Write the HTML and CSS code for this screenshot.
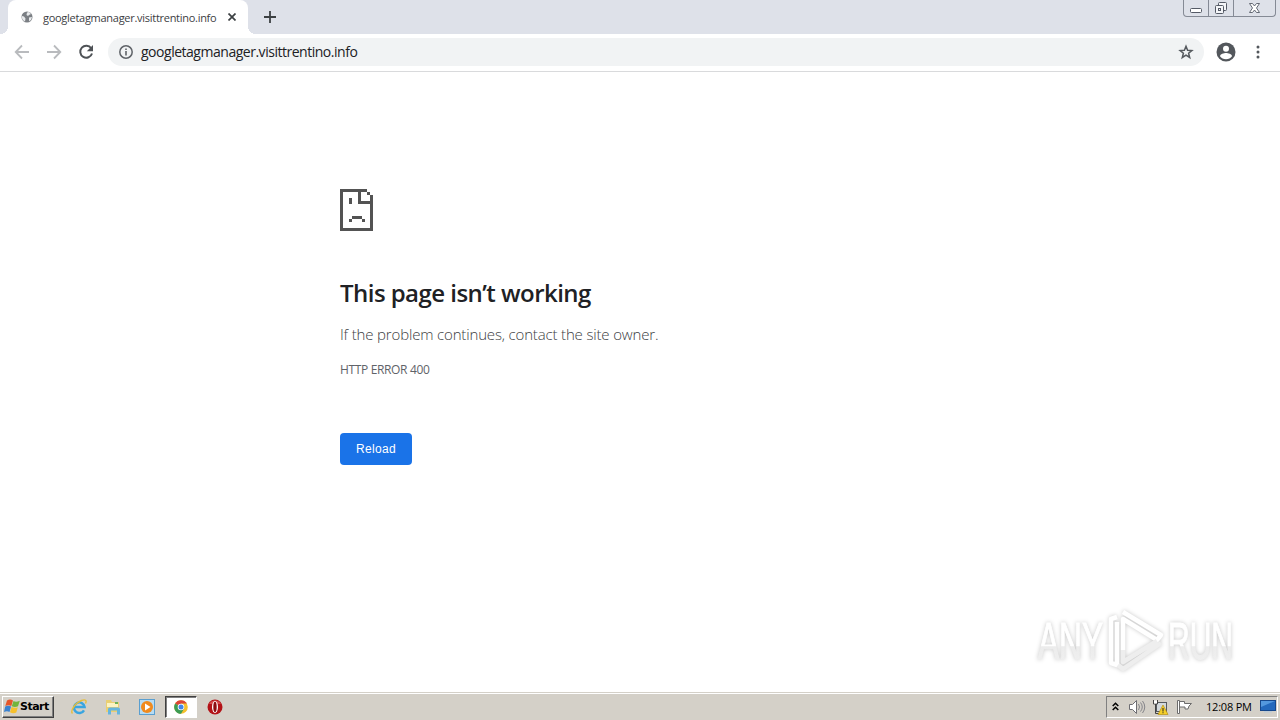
FILE: index.html
```html
<!DOCTYPE html>
<html lang="en">

<head>
  <meta charset="UTF-8">
  <meta name="viewport" content="width=device-width, initial-scale=1.0">
  <title>googletagmanager.visittrentino.info</title>
  <link rel="stylesheet" href="styles.css">
</head>

<body>

  <div id="tabstrip">
    <div class="tab">
      <svg class="favicon" width="12" height="12" viewBox="0 0 12 12">
        <circle cx="6" cy="6" r="5.500" fill="#7b7f84" />
        <path d="M1 5l2 .5 1.500 2L4 10.500A5 5 0 0 1 1 5zM6 1.500L8 1l2 2L8 4 7 5 5.500 4zM8 6.500l3-.5-1 3-2 1.200z" fill="#e8eaec" />
      </svg>
      <span class="tab-title">googletagmanager.visittrentino.info</span>
      <svg class="tab-close" width="8" height="8" viewBox="0 0 8 8">
        <path d="M.5.5l7 7M7.500.5l-7 7" stroke="#3c4043" stroke-width="1.700" />
      </svg>
    </div>
    <svg class="new-tab" width="12" height="12" viewBox="0 0 12 12">
      <path d="M6 0v12M0 6h12" stroke="#3c4043" stroke-width="1.800" />
    </svg>
    <div class="window-buttons">
      <div class="win-min">
        <svg width="13" height="6" viewBox="0 0 13 6"><rect x=".5" y=".5" width="11" height="4" rx="1" fill="#fff" stroke="#555a66" /></svg>
      </div>
      <div class="win-max">
        <svg width="14" height="14" viewBox="0 0 14 14" fill="#f4f5f8" stroke="#555a66">
          <rect x="4.500" y="1.500" width="8" height="8" rx="1" />
          <rect x="1.500" y="4.500" width="8" height="8" rx="1" />
          <rect x="4.500" y="7.500" width="2" height="2" />
        </svg>
      </div>
      <div class="win-close">
        <svg width="13" height="12" viewBox="0 0 13 12">
          <path d="M1.500 1.500h3l2 2.500 2-2.500h3L8.500 6l3 4.500h-3l-2-2.500-2 2.500h-3l3-4.500z" fill="#fff" stroke="#555a66" stroke-width=".9" />
        </svg>
      </div>
    </div>
  </div>

  <div id="toolbar">
    <svg class="nav" width="16" height="16" viewBox="0 0 16 16" fill="none" stroke="#b9bbbe" stroke-width="1.800">
      <path d="M15 8H2M8 1.500L1.700 8 8 14.500" />
    </svg>
    <svg class="nav" width="16" height="16" viewBox="0 0 16 16" fill="none" stroke="#b9bbbe" stroke-width="1.800">
      <path d="M1 8h13M8 1.500L14.300 8 8 14.500" />
    </svg>
    <svg class="nav" width="16" height="16" viewBox="0 0 16 16">
      <path d="M13.200 4.300A6 6 0 1 0 14 9.500" fill="none" stroke="#4e5256" stroke-width="2" />
      <path d="M15 1v6.200H8.800z" fill="#4e5256" />
    </svg>
    <div class="omnibox">
      <svg width="14" height="14" viewBox="0 0 14 14">
        <circle cx="7" cy="7" r="6.200" fill="none" stroke="#5f6368" stroke-width="1.500" />
        <path d="M7 6v4.500M7 3.500V5" stroke="#5f6368" stroke-width="1.600" />
      </svg>
      <span class="url">googletagmanager.visittrentino.info</span>
      <svg class="star" width="16" height="16" viewBox="0 0 16 16">
        <path d="M8 2.200l1.600 4 4.300.3-3.300 2.800 1.100 4.200L8 11.200l-3.700 2.300 1.100-4.200-3.300-2.800 4.300-.3z" fill="none" stroke="#55595e" stroke-width="1.500" />
      </svg>
    </div>
    <svg class="avatar" width="20" height="20" viewBox="0 0 20 20">
      <circle cx="10" cy="10" r="9.500" fill="#53575c" />
      <circle cx="10" cy="6.800" r="3" fill="#fff" />
      <path d="M4 14.200c0-2.300 4-3.200 6-3.200s6 .9 6 3.200c-1.300 1.900-3.500 3-6 3s-4.700-1.100-6-3z" fill="#fff" />
    </svg>
    <svg class="menu" width="4" height="14" viewBox="0 0 4 14" fill="#53575c">
      <circle cx="2" cy="2" r="1.500" />
      <circle cx="2" cy="7" r="1.500" />
      <circle cx="2" cy="12" r="1.500" />
    </svg>
  </div>

  <div id="content">
    <svg class="sad-page" width="33" height="42" viewBox="0 0 33 42" fill="#535353" shape-rendering="crispEdges">
      <path d="M0 0h27v3H3v36h27V15H18V3h3v9h9V6h3v36H0zM27 3h3v3h-3zM9 9h3v6H9zM12 27h10v3H12zM9 30h3v3H9zM22 30h3v3h-3z" />
    </svg>
    <h1>This page isn’t working</h1>
    <p class="summary">If the problem continues, contact the site owner.</p>
    <p class="error-code">HTTP ERROR 400</p>
    <button class="reload">Reload</button>

    <svg class="watermark" width="240" height="90" viewBox="0 0 240 90">
      <defs>
        <linearGradient id="fade" x1="0" y1="0" x2="0" y2="1">
          <stop offset=".58" stop-color="#fff" />
          <stop offset=".59" stop-color="#ececec" />
          <stop offset="1" stop-color="#f1f1f1" />
        </linearGradient>
      </defs>
      <g fill="url(#fade)" stroke="url(#fade)">
        <text x="8" y="59" font-size="51" textLength="65" lengthAdjust="spacingAndGlyphs">ANY</text>
        <text x="138" y="59" font-size="51" textLength="65" lengthAdjust="spacingAndGlyphs">RUN</text>
      </g>
      <g fill="none" stroke-width="4.500" stroke-linejoin="round">
        <path d="M87 17l-6 2v44l6 2V22" stroke="#fff" />
        <path d="M93 12l38 23-4 5-34-21v31" stroke="#fff" />
        <path d="M131 43L93 69l-5-4M127 41L93 62V50" stroke="#eee" />
      </g>
    </svg>
  </div>

  <div id="taskbar">
    <div class="start">
      <svg width="16" height="15" viewBox="0 0 16 15">
        <path d="M3 1.500q3-2 6 0L7.300 7Q4.500 5.500 1.300 7z" fill="#e5562a" />
        <path d="M9.500 2q2.500 1.500 6.300-.3L14 7.300q-3 1.500-6.200 0z" fill="#72b43b" />
        <path d="M1.200 7.600q3-1.500 5.900 0L5.500 13Q3 11.500 0 13z" fill="#3a82d0" />
        <path d="M7.600 8q2.800 1.500 6.200.2L12.300 13.500q-3 1.500-6.300-.3z" fill="#f6c02c" />
      </svg>
      <span>Start</span>
    </div>
    <div class="task">
      <svg width="18" height="18" viewBox="0 0 18 18" fill="none">
        <path d="M14 12.300A5.300 5.300 0 1 1 14.600 9H5" stroke="#39a5e0" stroke-width="2.400" />
        <path d="M2.500 15.500C0 13 5 5 11.500 2.500c4-1.500 5.500 0 4 3" stroke="#e6bd3b" stroke-width="1.400" />
      </svg>
    </div>
    <div class="task">
      <svg width="16" height="16" viewBox="0 0 16 16">
        <path d="M1 1h5l1 2h7v10H1z" fill="#e9cf73" />
        <path d="M2 4h11v4H2z" fill="#fbf3c2" />
        <path d="M10 3h3v2h-3z" fill="#6eb35a" />
        <path d="M3 15.500V10Q3 8.500 5 8.500h8q2 0 2 1.500v5.500h-3v-4H6v4z" fill="#65b5df" />
      </svg>
    </div>
    <div class="task">
      <svg width="16" height="16" viewBox="0 0 16 16">
        <rect x=".5" y=".5" width="15" height="15" fill="#b7dcf3" stroke="#5a9fd0" />
        <circle cx="8" cy="8" r="6" fill="#f08a1d" />
        <path d="M6 4.500L11.500 8 6 11.500z" fill="#fff" />
      </svg>
    </div>
    <div class="task active">
      <svg width="14" height="14" viewBox="0 0 14 14">
        <circle cx="7" cy="7" r="6.800" fill="#f5c02d" />
        <path d="M7 7L1.100 3.600A6.800 6.800 0 0 1 12.900 3.600H7z" fill="#dc4437" />
        <path d="M7 7L1.100 3.600A6.800 6.800 0 0 0 7 13.800L10 8.700z" fill="#3c9c54" />
        <circle cx="7" cy="7" r="3.300" fill="#fff" />
        <circle cx="7" cy="7" r="2.500" fill="#4285e8" />
      </svg>
    </div>
    <div class="task">
      <svg width="16" height="16" viewBox="0 0 16 16">
        <circle cx="8" cy="8" r="7.500" fill="#b31217" />
        <path d="M2 5a7 7 0 0 1 12 0z" fill="#d8494b" />
        <ellipse cx="8" cy="8" rx="3" ry="6" fill="#fff" />
        <ellipse cx="8" cy="8" rx="1.700" ry="5.200" fill="#8e0b10" />
      </svg>
    </div>

    <div class="tray">
      <svg class="chevrons" width="7" height="9" viewBox="0 0 7 9" fill="none" stroke="#000" stroke-width="1.500">
        <path d="M.7 4l2.800-2.800L6.300 4M.7 8l2.800-2.800L6.300 8" />
      </svg>
      <svg class="sound" width="18" height="16" viewBox="0 0 18 16" fill="none" stroke="#85858a">
        <path d="M1.500 5.500h3l4-4v13l-4-4h-3z" fill="#fff" stroke="#6d6d72" />
        <path d="M10.500 5q2 3 0 6M12.500 3.500q3.500 4.500 0 9M14.500 2q4.500 6 0 12" />
      </svg>
      <svg class="network" width="17" height="16" viewBox="0 0 17 16">
        <rect x="4.500" y="3.500" width="10" height="9" fill="#d3d9dd" stroke="#55595e" />
        <path d="M1.500 1v4h4V1M3.500 5v9.500H8" fill="none" stroke="#444" />
        <path d="M2 1.500h3v3H2z" fill="#fff" />
        <path d="M11 6l5 9.500H6z" fill="#f5cf28" stroke="#b89114" stroke-width=".7" />
        <path d="M10.500 9h1v3.500h-1zM10.500 13.300h1v1h-1z" fill="#222" />
      </svg>
      <svg class="flag" width="17" height="16" viewBox="0 0 17 16" fill="#fff" stroke="#6c6c6c">
        <path d="M1.500 1.500h2v13h-2zM3.500 2.500h5v2h7L13 7l-1 3H9V8H3.500z" />
      </svg>
      <span class="clock">12:08 PM</span>
      <svg class="desktop" width="16" height="13" viewBox="0 0 16 13">
        <rect x=".5" y=".5" width="15" height="10" fill="#2369bd" stroke="#16488c" />
        <path d="M1 1h14L1 7z" fill="#5398de" />
        <path d="M4 11h8v1.500H4z" fill="#bfcbd5" />
      </svg>
    </div>
  </div>

</body>

</html>
```
FILE: styles.css
```css
* {
  box-sizing: border-box;
}

body {
  margin: 0;
  width: 1280px;
  height: 720px;
  overflow: hidden;
  display: flex;
  flex-direction: column;
  background-color: #fff;
  font-family: "Open Sans", "Noto Sans", sans-serif;
}

svg {
  display: block;
  flex: none;
}

#tabstrip {
  height: 34px;
  flex: none;
  display: flex;
  padding-left: 8px;
  background-color: #dee1e9;
}

.tab {
  position: relative;
  width: 240px;
  height: 34px;
  display: flex;
  align-items: center;
  padding: 0 12px 0 13px;
  border-radius: 8px 8px 0 0;
  background-color: #fff;
}

/* bottom curves of the tab */
.tab::before,
.tab::after {
  content: "";
  position: absolute;
  bottom: 0;
  width: 8px;
  height: 8px;
}

.tab::before {
  left: -8px;
  background: radial-gradient(circle at 0 0, transparent 8px, #fff 8px);
}

.tab::after {
  right: -8px;
  background: radial-gradient(circle at 100% 0, transparent 8px, #fff 8px);
}

.tab-title {
  margin-left: 10px;
  width: 175px;
  font-size: 11px;
  letter-spacing: -0.28px;
  white-space: nowrap;
  color: #3c4043;
}

.tab-close {
  margin-left: 10px;
}

.new-tab {
  margin: 11px 0 0 16px;
}

.window-buttons {
  display: flex;
  width: 93px;
  height: 17px;
  margin: 0 4px 0 auto;
  border: 1px solid #858a95;
  border-top: none;
  border-radius: 0 0 4px 4px;
}

.window-buttons div {
  display: flex;
  align-items: center;
  justify-content: center;
}

.win-min {
  width: 24px;
  padding-top: 5px;
}

.win-max {
  width: 26px;
  border-left: 1px solid #858a95;
  border-right: 1px solid #858a95;
}

.win-close {
  flex: 1;
}

#toolbar {
  height: 38px;
  flex: none;
  display: flex;
  align-items: center;
  padding: 0 20px 2px 14px;
  border-bottom: 1px solid #d9dadc;
}

.nav {
  margin-right: 16px;
}

.omnibox {
  display: flex;
  align-items: center;
  width: 1096px;
  height: 28px;
  margin-left: -2px;
  padding: 0 10px 0 11px;
  border-radius: 14px;
  background-color: #f1f3f4;
}

.url {
  margin-left: 8px;
  font-size: 14px;
  letter-spacing: -0.48px;
  white-space: nowrap;
  color: #202124;
}

.star {
  margin-left: auto;
}

.avatar {
  margin-left: 12px;
}

.menu {
  margin-left: auto;
}

#content {
  position: relative;
  flex: 1;
  padding: 117px 0 0 340px;
}

#content h1 {
  margin: 45px 0 0;
  font-size: 24px;
  line-height: 34px;
  font-weight: 600;
  letter-spacing: -0.54px;
  color: #202124;
}

.summary {
  margin: 14px 0 0;
  font-size: 15px;
  line-height: 20px;
  font-weight: 300;
  letter-spacing: -0.16px;
  color: #3c4043;
}

.error-code {
  margin: 17px 0 0;
  font-size: 12px;
  line-height: 18px;
  letter-spacing: -0.35px;
  color: #5f6368;
}

.reload {
  display: block;
  width: 72px;
  height: 32px;
  margin-top: 54px;
  padding: 0;
  border: none;
  border-radius: 4px;
  background-color: #1a73e8;
  color: #fff;
  font-family: "Liberation Sans", sans-serif;
  font-size: 12px;
  letter-spacing: 0.3px;
}

.watermark {
  position: absolute;
  left: 1030px;
  top: 528px;
  font-family: "Liberation Sans", sans-serif;
  filter: drop-shadow(0 0 2px rgba(0, 0, 0, 0.22));
}

#taskbar {
  height: 28px;
  flex: none;
  display: flex;
  align-items: center;
  padding: 0 2px;
  border-top: 1px solid #d4d0c8;
  box-shadow: inset 0 1px #fff;
  background-color: #d4d0c8;
}

.start {
  display: flex;
  align-items: center;
  width: 52px;
  height: 22px;
  margin-right: 9px;
  padding-left: 1px;
  border: 1px solid;
  border-color: #fff #404040 #404040 #fff;
  box-shadow: inset -1px -1px #808080;
  font-family: "DejaVu Sans", sans-serif;
  font-size: 11px;
  font-weight: bold;
  letter-spacing: -0.5px;
  color: #000;
}

.task {
  display: flex;
  align-items: center;
  justify-content: center;
  width: 32px;
  height: 22px;
  margin-right: 2px;
}

.task.active {
  border: 1px solid;
  border-color: #404040 #fff #fff #404040;
  box-shadow: inset 1px 1px #808080;
  background-color: #fff;
}

.tray {
  display: flex;
  align-items: center;
  width: 172px;
  height: 22px;
  margin-left: auto;
  padding-left: 5px;
  border: 1px solid;
  border-color: #808080 #fff #fff #808080;
}

.sound {
  margin-left: 9px;
}

.network {
  margin-left: 6px;
}

.flag {
  margin-left: 7px;
}

.clock {
  width: 46px;
  margin-left: 13px;
  font-size: 11px;
  letter-spacing: -0.2px;
  white-space: nowrap;
  color: #000;
}

.desktop {
  margin-left: 8px;
}
```
